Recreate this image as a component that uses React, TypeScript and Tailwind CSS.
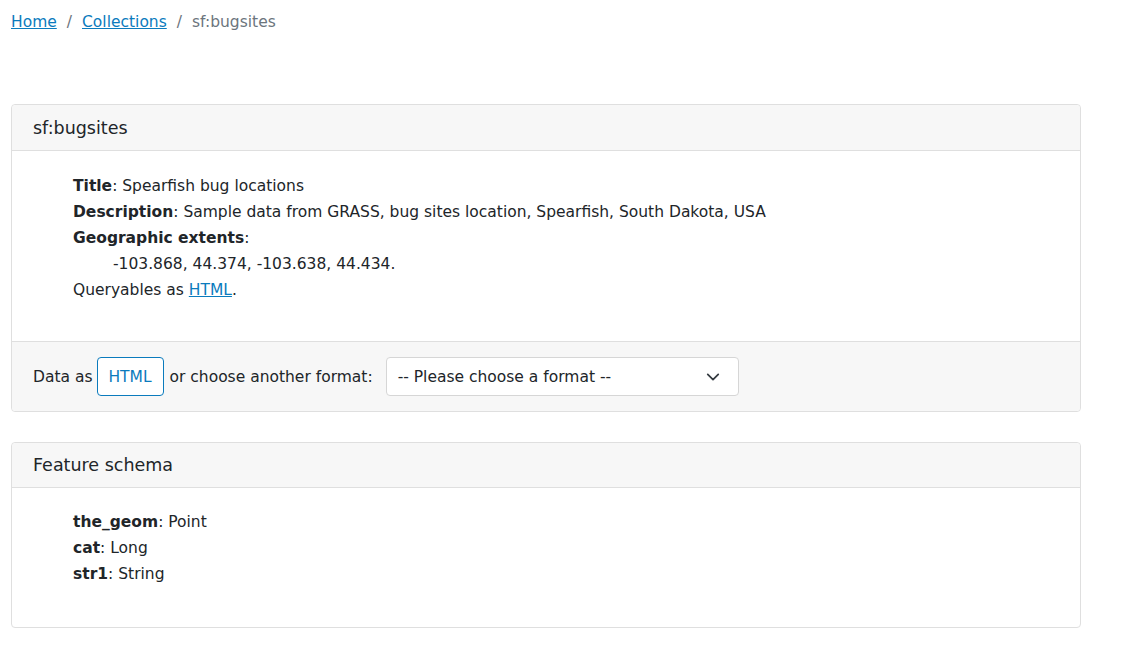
import React from "react";

const font = { fontFamily: '"DejaVu Sans", Verdana, sans-serif' };

export default function App() {
  return (
    <div className="min-h-[670px] bg-white text-[#212529] text-[15.5px] leading-[26px]" style={font}>
      <div className="px-[11px] pt-[9px]">
        <nav className="flex items-center text-[#6c757d] h-[26px]">
          <a href="#" className="text-[#0b7bbd] underline">Home</a>
          <span className="px-[10px]">/</span>
          <a href="#" className="text-[#0b7bbd] underline">Collections</a>
          <span className="px-[10px]">/</span>
          <span>sf:bugsites</span>
        </nav>

        <div className="mt-[69px] w-[1070px] border border-[#dfdfdf] rounded-[4px]">
          <div className="h-[46px] bg-[#f7f7f7] border-b border-[#dfdfdf] px-[21px] flex items-center text-[17.5px] rounded-t-[4px]">
            sf:bugsites
          </div>
          <div className="px-[20px] pt-[22px] pb-[38px]">
            <ul className="pl-[41px]">
              <li><b>Title</b>: Spearfish bug locations</li>
              <li><b>Description</b>: Sample data from GRASS, bug sites location, Spearfish, South Dakota, USA</li>
              <li>
                <b>Geographic extents</b>:
                <ul className="pl-[40px]"><li>-103.868, 44.374, -103.638, 44.434.</li></ul>
              </li>
              <li>Queryables as <a href="#" className="text-[#0b7bbd] underline">HTML</a>.</li>
            </ul>
          </div>
          <div className="bg-[#f7f7f7] border-t border-[#dfdfdf] px-[21px] h-[70px] flex items-center rounded-b-[4px]">
            <span>Data as</span>
            <button className="ml-[4px] h-[39px] w-[67px] border border-[#0b7bbd] text-[#0b7bbd] rounded-[4px] bg-white">HTML</button>
            <span className="ml-[6px]">or choose another format:</span>
            <div className="ml-[13px] w-[353px] h-[39px] bg-white border border-[#d6d6d6] rounded-[4px] flex items-center justify-between pl-[11px] pr-[18px]">
              <span>-- Please choose a format --</span>
              <svg width="14" height="14" viewBox="0 0 16 16" fill="none" stroke="#343a40" strokeWidth="2" strokeLinecap="round" strokeLinejoin="round">
                <path d="M2 5l6 6 6-6" />
              </svg>
            </div>
          </div>
        </div>

        <div className="mt-[30px] w-[1070px] border border-[#dfdfdf] rounded-[4px]">
          <div className="h-[45px] bg-[#f7f7f7] border-b border-[#dfdfdf] px-[21px] flex items-center text-[17.5px] rounded-t-[4px]">
            Feature schema
          </div>
          <div className="px-[20px] pt-[21px] pb-[40px]">
            <ul className="pl-[41px]">
              <li><b>the_geom</b>: Point</li>
              <li><b>cat</b>: Long</li>
              <li><b>str1</b>: String</li>
            </ul>
          </div>
        </div>
      </div>
    </div>
  );
}
